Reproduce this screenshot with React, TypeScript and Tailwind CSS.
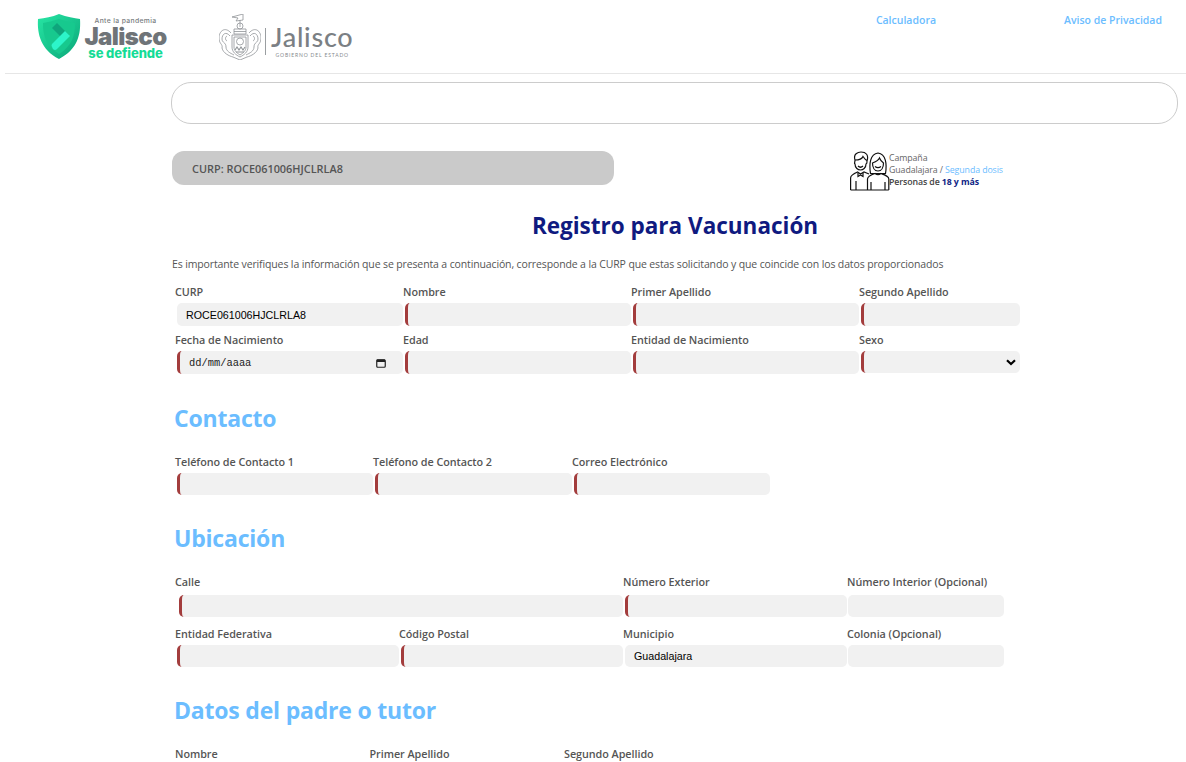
import React from "react";

const Shield = () => (
  <svg width="44" height="46" viewBox="0 0 44 46" className="shrink-0">
    <defs>
      <linearGradient id="sg" x1="0" y1="0" x2="1" y2="1">
        <stop offset="0" stopColor="#27e6a4" />
        <stop offset="1" stopColor="#0aa678" />
      </linearGradient>
    </defs>
    <path d="M22 0 C30 3 37 4 43 5 C44 20 41 35 22 45 C4 36 0 20 1 5 C8 4 15 3 22 0Z" fill="url(#sg)" />
    <path d="M22 5 C28 7 33 8 38 9 C38 22 35 32 22 40 C9 32 6 22 6 9 C11 8 16 7 22 5Z" fill="#17c98e" />
    <path d="M15 14 L20 9 L32 21 L27 26Z" fill="#0fa57c" />
    <path d="M15 30 L28 17 L33 22 L20 35 Q18 37 16 35 L15 33 Q14 31 15 30Z" fill="#2df5c9" />
  </svg>
);

const Crest = () => (
  <svg width="42" height="46" viewBox="0 0 42 46" fill="none" stroke="#8f9397" strokeWidth="0.8" className="shrink-0">
    <path d="M13 3 L24 0 L24 6 L17 7 L19 4Z" />
    <path d="M21 6 V13" />
    <circle cx="21" cy="12" r="3" />
    <path d="M15 15 H27 V20 H15Z M15 17.5 H27" />
    <path d="M12 19 C6 12 0 17 0 24 C0 30 4 30 3 34 C4 39 10 42 14 43 L21 46 L28 43 C32 42 38 39 39 34 C38 30 42 30 42 24 C42 17 36 12 30 19" />
    <path d="M11 22 C7 17 3 20 3 25 C3 29 7 28 7 33 C7 37 11 39 15 41" />
    <path d="M31 22 C35 17 39 20 39 25 C39 29 35 28 35 33 C35 37 31 39 27 41" />
    <path d="M8 22 C6 23 6 26 8 27 M34 22 C36 23 36 26 34 27" />
    <path d="M13 21 H29 V33 C29 38 25 41 21 43 C17 41 13 38 13 33Z" />
    <path d="M15 23 H27 V33 C27 37 24 39 21 41 C18 39 15 37 15 33Z" />
    <circle cx="21" cy="27.5" r="3.5" />
    <path d="M16 36 L18 33 L20 36 L22 33 L24 36 L26 33 M17 38 H25" strokeWidth="1.1" />
  </svg>
);

const People = () => (
  <svg width="40" height="40" viewBox="0 0 40 40" fill="none" stroke="#111" strokeWidth="1.2" className="shrink-0">
    <path d="M5 9 C3 3 8 1 11 1 C16 1 19 4 17 10 C17 12 17 13 16 13 C16 17 13 19 10.5 19 C8 19 5 17 5 13 C4 13 5 11 5 9Z" />
    <path d="M5 9 C8 9 12 8 13 5.5 C14 7 15.5 9 17 9.5" />
    <path d="M8 15 C9.5 16.5 11.5 16.5 13 15" />
    <path d="M0.6 39 V27 C0.6 24 4 22.5 7.5 21 L10.5 23 L14 21 L19 23" />
    <path d="M8 22 L8 25.5 L10.5 24 L13 25.5 L13 22" />
    <path d="M0.6 39 H38.8" />
    <path d="M6 39 V30" />
    <path d="M20.5 22.5 C19 13 20 3 28 2 C36 3 37 13 35.5 22.5 Z" />
    <path d="M22.5 12 C25 11 28 10 29.5 7 C30.5 9.5 32 11 33.5 12 C33.5 16.5 31.5 20 28 20 C24.5 20 22.5 16.5 22.5 12Z" />
    <path d="M25 15.5 C27 17 29 17 31 15.5" />
    <path d="M17.5 39 V28 C17.5 25 22 23.5 25 22.5 C27 24 29 24 31 22.5 C34 23.5 38.8 25 38.8 28 V39" />
    <path d="M21 39 V31 M35 39 V31" />
  </svg>
);

const Label = ({ children }: { children: React.ReactNode }) => (
  <label className="block pl-[3px] text-[10.8px] leading-[15px] font-semibold tracking-[-0.05px] text-[#555555] whitespace-nowrap">{children}</label>
);

const Field = ({
  label,
  value,
  mark = true,
  select,
  date,
  low,
  short,
  inset,
  flush,
}: {
  label: string;
  value?: string;
  mark?: boolean;
  select?: boolean;
  date?: boolean;
  low?: boolean;
  short?: boolean;
  inset?: boolean;
  flush?: boolean;
}) => (
  <div className="min-w-0">
    <Label>{label}</Label>
    <div
      className={`${low ? "mt-[6px]" : "mt-[4px]"} ${inset ? "ml-[7px]" : flush ? "ml-[4px]" : "ml-[5px]"} mr-[-3px] flex items-center rounded-[5px] bg-[#f1f1f1] text-black ${short ? "h-[22px]" : "h-[23px]"} ${mark ? "border-l-[3px] border-[#a33d3d]" : ""}`}
    >
      {value && <span className={`${short ? "" : "pt-[2px]"} pl-[9px] text-[10.7px] font-['Liberation_Sans',sans-serif]`}>{value}</span>}
      {date && (
        <>
          <span className="pt-[3px] pl-[9px] text-[10.4px] font-['Liberation_Mono',monospace] text-[#222]">dd/mm/aaaa</span>
          <svg width="10" height="10" viewBox="0 0 10 10" className="ml-auto mr-[17px]">
            <rect x="0.75" y="1.75" width="8.5" height="7.5" rx="1" fill="none" stroke="#222" strokeWidth="1.2" />
            <rect x="1" y="1.5" width="8" height="2.5" fill="#222" />
          </svg>
        </>
      )}
      {select && (
        <svg width="10" height="7" viewBox="0 0 10 7" fill="none" stroke="#000" strokeWidth="2.2" className="ml-auto mr-[4px]">
          <path d="M1 1.2 L5 5 L9 1.2" />
        </svg>
      )}
    </div>
  </div>
);

const Heading = ({ children, className }: { children: React.ReactNode; className: string }) => (
  <h2 className={`pl-[2px] text-[23px] leading-[30px] font-bold tracking-[-0.2px] text-[#6bbdff] ${className}`}>{children}</h2>
);

export default function App() {
  return (
    <div className="h-[762px] overflow-hidden bg-white font-['Open_Sans',sans-serif]">
      <header className="ml-[5px] flex h-[74px] border-b border-[#e6e6e6]">
        <div className="ml-[32px] mt-[14px] flex h-[46px] items-start">
          <Shield />
          <div className="ml-[1px] flex w-[87px] flex-col items-center font-['Inter',sans-serif]">
            <span className="mt-[3px] text-[6.8px] leading-[8px] font-medium tracking-[0.35px] text-[#777c80] whitespace-nowrap">Ante la pandemia</span>
            <span className="mt-[1px] text-[24px] leading-[21px] font-black tracking-[-0.6px] text-[#6f7478] whitespace-nowrap">Jalisco</span>
            <span className="text-[13px] leading-[13px] font-extrabold tracking-[-0.1px] text-[#14dc96] whitespace-nowrap">se defiende</span>
          </div>
        </div>
        <div className="ml-[50px] mt-[14px] flex items-start">
          <Crest />
          <div className="ml-[4px] mt-[14px] h-[27px] w-px bg-[#9a9ea1]" />
          <div className="ml-[5px] mt-[10px] flex flex-col items-center font-['Lato',sans-serif]">
            <span className="text-[27px] leading-[26px] font-medium tracking-[0.75px] text-[#7b8084] whitespace-nowrap">Jalisco</span>
            <span className="mt-[2px] text-[5px] leading-[6px] tracking-[0.85px] text-[#85898d] whitespace-nowrap">GOBIERNO DEL ESTADO</span>
          </div>
        </div>
        <nav className="ml-auto flex pt-[13px] text-[10.5px] leading-[15px] font-semibold text-[#6bbdff]">
          <a>Calculadora</a>
          <a className="ml-[128px] mr-[24px]">Aviso de Privacidad</a>
        </nav>
      </header>

      <main className="ml-[172px] mr-[8px]">
        <div className="mt-[8px] -ml-px h-[42px] rounded-[20px] border border-[#cccccc]" />

        <div className="mt-[27px] flex h-[40px] items-start">
          <div className="flex h-[34px] w-[442px] items-center rounded-[12px] bg-[#cacaca] pl-[20px] pt-[2px] text-[10.9px] font-semibold text-[#555555]">
            CURP: ROCE061006HJCLRLA8
          </div>
          <div className="ml-[236px] flex">
            <People />
            <div className="-ml-px pt-px text-[8.8px] leading-[12px] tracking-[-0.1px] text-[#666666] whitespace-nowrap">
              <p>Campaña</p>
              <p>
                Guadalajara / <span className="text-[#6bbdff]">Segunda dosis</span>
              </p>
              <p className="font-semibold text-[#444444]">
                Personas de <span className="font-bold text-[#101f85]">18 y más</span>
              </p>
            </div>
          </div>
        </div>

        <h1 className="mt-[20px] w-[1006px] text-center text-[22.5px] leading-[30px] font-bold text-[#0f1a80]">
          Registro para Vacunación
        </h1>

        <p className="mt-[16px] text-[10.5px] leading-[14px] tracking-[-0.13px] text-[#555555] whitespace-nowrap">
          Es importante verifiques la información que se presenta a continuación, corresponde a la CURP que estas solicitando y que coincide con los datos proporcionados
        </p>

        <div className="mt-[13px] grid w-[845px] grid-cols-[228px_228px_228px_161px]">
          <Field label="CURP" value="ROCE061006HJCLRLA8" mark={false} />
          <Field label="Nombre" />
          <Field label="Primer Apellido" />
          <Field label="Segundo Apellido" />
        </div>
        <div className="mt-[6px] grid w-[845px] grid-cols-[228px_228px_228px_161px]">
          <Field label="Fecha de Nacimiento" date />
          <Field label="Edad" />
          <Field label="Entidad de Nacimiento" />
          <Field label="Sexo" select short />
        </div>

        <Heading className="mt-[29px]">Contacto</Heading>
        <div className="mt-[21px] grid w-[595px] grid-cols-[198px_199px_198px]">
          <Field label="Teléfono de Contacto 1" short />
          <Field label="Teléfono de Contacto 2" short />
          <Field label="Correo Electrónico" short />
        </div>

        <Heading className="mt-[28px]">Ubicación</Heading>
        <div className="mt-[21px] grid w-[829px] grid-cols-[448px_224px_157px]">
          <Field label="Calle" low short inset />
          <Field label="Número Exterior" low short />
          <Field label="Número Interior (Opcional)" mark={false} low short flush />
        </div>
        <div className="mt-[9px] grid w-[829px] grid-cols-[224px_224px_224px_157px]">
          <Field label="Entidad Federativa" short />
          <Field label="Código Postal" short />
          <Field label="Municipio" value="Guadalajara" mark={false} short />
          <Field label="Colonia (Opcional)" mark={false} short flush />
        </div>

        <Heading className="mt-[28px]">Datos del padre o tutor</Heading>
        <div className="mt-[21px] grid w-[600px] grid-cols-[194.5px_194.5px_211px]">
          <Label>Nombre</Label>
          <Label>Primer Apellido</Label>
          <Label>Segundo Apellido</Label>
        </div>
      </main>
    </div>
  );
}
